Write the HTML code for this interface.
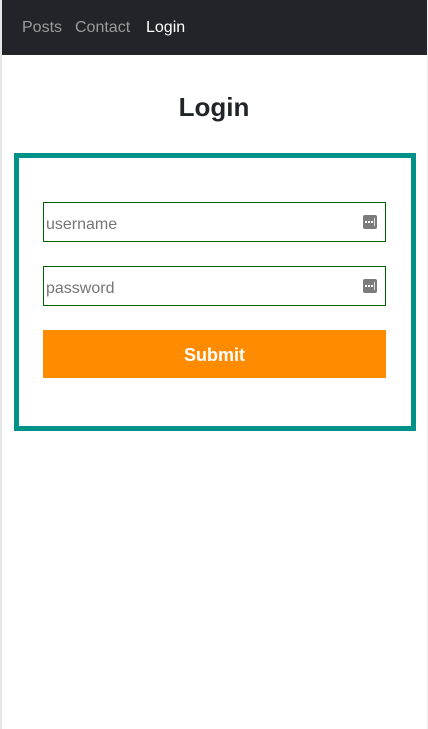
<!DOCTYPE html>
<html><head><style>
body{margin:0;width:428px;height:729px;background:#fff;font-family:"Liberation Sans",sans-serif;position:relative;overflow:hidden}
.lb{position:absolute;left:0;top:0;width:2px;height:729px;background:#e6e6e6}
.rb{position:absolute;right:0;top:0;width:1px;height:729px;background:#eee}
nav{position:absolute;left:2px;top:0;width:425px;height:55px;background:#212529}
nav span{position:absolute;top:19px;font-size:16px;color:#9a9b9d}
h1{position:absolute;left:0;width:428px;top:92px;margin:0;text-align:center;font-size:26px;font-weight:bold;color:#212529}
.box{position:absolute;left:14px;top:153px;width:392px;height:268px;border:5px solid #009189}
.in{position:absolute;left:43px;width:341px;height:38px;border:1px solid #006400;font-size:16px;color:#757575}
.in span{position:absolute;left:2px;top:13px}
.ic{position:absolute;right:8px;top:12px;width:14px;height:14px;background:#7b7b7b;border-radius:2px}
.ic:after{content:"";position:absolute;left:2px;top:6px;width:8px;height:2px;border-top:2px dotted #fff}
.ic:before{content:"";position:absolute;right:2px;top:3px;width:1px;height:8px;background:#ddd}
.btn{position:absolute;left:43px;top:330px;width:343px;height:48px;background:#ff8c00;color:#fff;font-weight:bold;font-size:18px;text-align:center;line-height:50px}
</style></head><body>
<div class="lb"></div><div class="rb"></div>
<nav><span style="left:20px">Posts</span><span style="left:73px">Contact</span><span style="left:144px;color:#fff">Login</span></nav>
<h1>Login</h1>
<div class="box"></div>
<div class="in" style="top:202px"><span>username</span><div class="ic"></div></div>
<div class="in" style="top:266px"><span>password</span><div class="ic"></div></div>
<div class="btn">Submit</div>
</body></html>
